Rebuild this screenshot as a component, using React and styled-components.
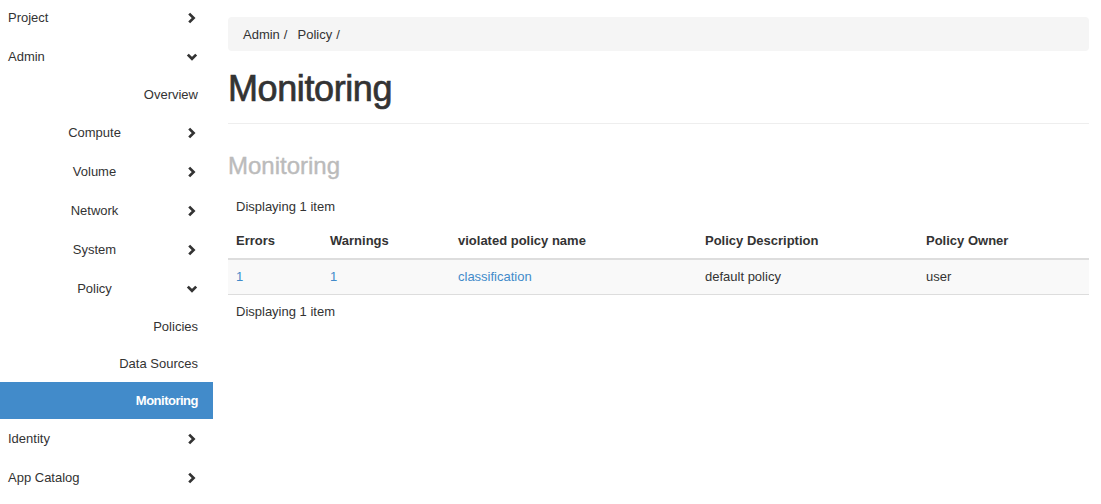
import React from "react";
import styled, { createGlobalStyle } from "styled-components";

const GlobalStyle = createGlobalStyle`
  html, body {
    margin: 0;
    padding: 0;
    background: #fff;
  }
  body {
    font-family: "Liberation Sans", Arial, Helvetica, sans-serif;
    font-size: 13px;
    color: #333;
  }
`;

const Page = styled.div`
  display: flex;
  width: 1101px;
  min-height: 504px;
  overflow: hidden;
`;

const Sidebar = styled.nav`
  width: 213px;
  flex-shrink: 0;
  display: flex;
  flex-direction: column;
  margin-top: -2px;
`;

const NavRow = styled.div`
  display: flex;
  align-items: center;
  height: ${(p) => (p.level === 2 ? 37 : 39)}px;
  padding: 0 15px 0 ${(p) => (p.level === 0 ? 8 : 0)}px;
  background: ${(p) => (p.active ? "#428bca" : "transparent")};
  color: ${(p) => (p.active ? "#fff" : "#333")};
  font-weight: ${(p) => (p.active ? "bold" : "normal")};
  letter-spacing: ${(p) => (p.active ? "-0.5px" : "normal")};
  cursor: pointer;
`;

const NavLabel = styled.span`
  flex: 1;
  text-align: ${(p) => (p.level === 0 ? "left" : p.level === 1 ? "center" : "right")};
  padding-left: ${(p) => (p.level === 1 ? 3 : 0)}px;
`;

const IconBox = styled.span`
  width: 12px;
  height: 12px;
  display: flex;
  flex-shrink: 0;
`;

const Chevron = ({ down }) => (
  <IconBox>
    <svg width="12" height="12" viewBox="0 0 12 12">
      <polyline
        points={down ? "1.8,3.6 6,7.8 10.2,3.6" : "3.2,1.6 7.6,6 3.2,10.4"}
        fill="none"
        stroke="#333"
        strokeWidth="2.7"
        strokeLinecap="butt"
        strokeLinejoin="miter"
      />
    </svg>
  </IconBox>
);

const Main = styled.main`
  flex: 1;
  padding: 17px 12px 0 15px;
  min-width: 0;
`;

const Breadcrumb = styled.div`
  display: flex;
  align-items: center;
  height: 34px;
  padding: 0 15px;
  background: #f5f5f5;
  border-radius: 4px;
  color: #333;
`;

const Crumb = styled.span``;

const Sep = styled.span`
  margin: 0 10px 0 4px;
`;

const Title = styled.h1`
  margin: 18px 0 0;
  font-size: 36px;
  line-height: 39.6px;
  font-weight: 500;
  color: #333;
  letter-spacing: -0.4px;
  -webkit-text-stroke: 0.7px #333;
`;

const Rule = styled.hr`
  margin: 14px 0 0;
  border: 0;
  border-top: 1px solid #eee;
`;

const SubTitle = styled.h2`
  margin: 29px 0 0;
  font-size: 24px;
  line-height: 26px;
  font-weight: normal;
  color: #bbb;
  -webkit-text-stroke: 0.4px #bbb;
`;

const CountLine = styled.div`
  line-height: 20px;
  padding: 0 8px;
  margin-top: ${(p) => p.top}px;
`;

const Table = styled.table`
  width: 100%;
  border-collapse: collapse;
  table-layout: fixed;
  margin-top: 5px;
`;

const Th = styled.th`
  box-sizing: border-box;
  text-align: left;
  font-weight: bold;
  padding: 9px 8px 7px;
  line-height: 20px;
  border-bottom: 2px solid #ddd;
  width: ${(p) => (p.w ? `${p.w}px` : "auto")};
`;

const Row = styled.tr`
  background: #f9f9f9;
  border-bottom: 1px solid #ddd;
`;

const Td = styled.td`
  padding: 8px;
  line-height: 18px;
`;

const Link = styled.a`
  color: #428bca;
  text-decoration: none;
`;

const nav = [
  { label: "Project", level: 0, chevron: "right" },
  { label: "Admin", level: 0, chevron: "down" },
  { label: "Overview", level: 2 },
  { label: "Compute", level: 1, chevron: "right" },
  { label: "Volume", level: 1, chevron: "right" },
  { label: "Network", level: 1, chevron: "right" },
  { label: "System", level: 1, chevron: "right" },
  { label: "Policy", level: 1, chevron: "down" },
  { label: "Policies", level: 2 },
  { label: "Data Sources", level: 2 },
  { label: "Monitoring", level: 2, active: true },
  { label: "Identity", level: 0, chevron: "right" },
  { label: "App Catalog", level: 0, chevron: "right" },
];

export default function App() {
  return (
    <Page>
      <GlobalStyle />
      <Sidebar>
        {nav.map((item) => (
          <NavRow key={item.label} level={item.level} active={item.active}>
            <NavLabel level={item.level}>{item.label}</NavLabel>
            {item.chevron && <Chevron down={item.chevron === "down"} />}
          </NavRow>
        ))}
      </Sidebar>
      <Main>
        <Breadcrumb>
          <Crumb>Admin</Crumb>
          <Sep>/</Sep>
          <Crumb>Policy</Crumb>
          <Sep>/</Sep>
        </Breadcrumb>
        <Title>Monitoring</Title>
        <Rule />
        <SubTitle>Monitoring</SubTitle>
        <CountLine top={18}>Displaying 1 item</CountLine>
        <Table>
          <thead>
            <tr>
              <Th w={94}>Errors</Th>
              <Th w={128}>Warnings</Th>
              <Th w={247}>violated policy name</Th>
              <Th w={221}>Policy Description</Th>
              <Th>Policy Owner</Th>
            </tr>
          </thead>
          <tbody>
            <Row>
              <Td><Link href="#">1</Link></Td>
              <Td><Link href="#">1</Link></Td>
              <Td><Link href="#">classification</Link></Td>
              <Td>default policy</Td>
              <Td>user</Td>
            </Row>
          </tbody>
        </Table>
        <CountLine top={7}>Displaying 1 item</CountLine>
      </Main>
    </Page>
  );
}
